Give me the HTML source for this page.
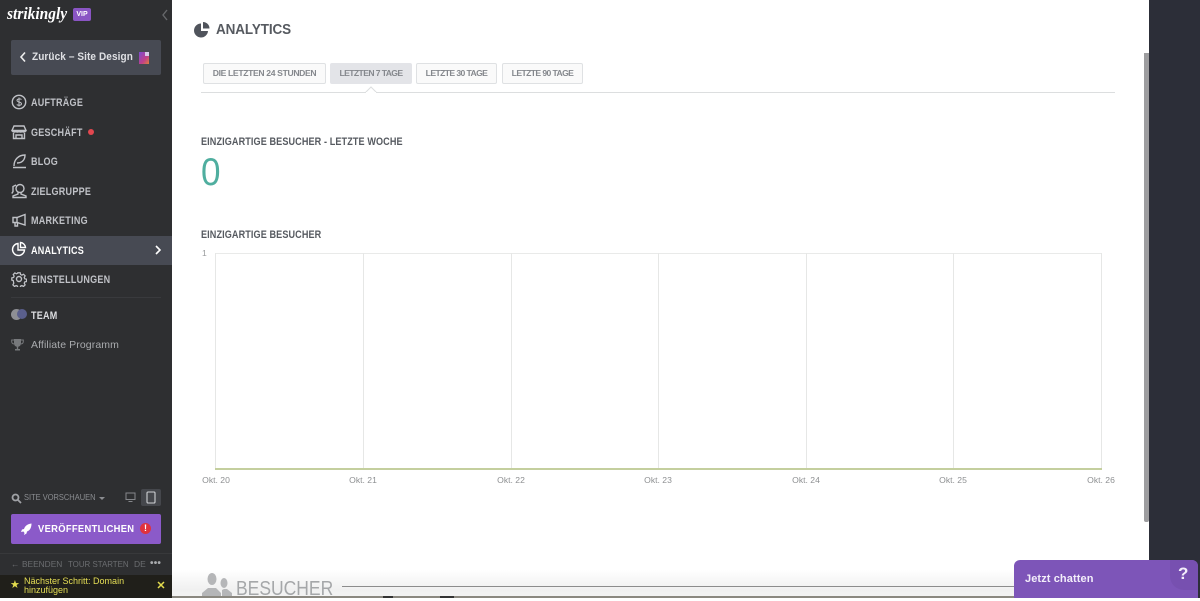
<!DOCTYPE html>
<html><head><meta charset="utf-8">
<style>
html,body{margin:0;padding:0;width:1200px;height:598px;overflow:hidden;background:#fff;font-family:"Liberation Sans",sans-serif}
.a{position:absolute;white-space:nowrap;transform-origin:left top}
#side{position:absolute;left:0;top:0;width:172px;height:598px;background:#2e2f31}
.nav{font-size:10.8px;font-weight:bold;color:#c0c2c7;letter-spacing:.3px;left:31px;line-height:12px;transform:scaleX(.835)}
.tab{position:absolute;top:63px;height:19px;border:1px solid #dfe1e3;border-radius:2px;background:#fafafa;font-size:8.6px;font-weight:bold;color:#85888d;text-align:center;line-height:19px;letter-spacing:-.35px;white-space:nowrap}
.tab.n{letter-spacing:-.6px}
.ic{position:absolute;fill:none;stroke:#c0c2c7;stroke-width:1.4}
.gv{position:absolute;top:253px;width:1px;height:216px;background:#e6e7e6}
.xl{position:absolute;top:475px;font-size:8.6px;color:#8d8f91;width:50px;text-align:center;line-height:11px}
.h{font-size:11px;font-weight:bold;color:#565a60;line-height:13px;letter-spacing:.12px;transform:scaleX(.827)}
</style></head><body>
<div id="side">
<div class="a" style="left:7px;top:4px;font-family:'Liberation Serif',serif;font-style:italic;font-weight:bold;font-size:17px;color:#fff;line-height:20px;transform:scaleX(.91)">strikingly</div>
<div class="a" style="left:73px;top:8px;width:18px;height:13px;background:#8a55c4;border-radius:2px;color:#fff;font-size:7px;font-weight:bold;text-align:center;line-height:13px">VIP</div>
<svg class="ic" style="left:161px;top:9px;stroke:#66686b" width="8" height="12"><path d="M6 1L2 6l4 5"/></svg>

<div class="a" style="left:11px;top:40px;width:150px;height:35px;background:#474a53;border-radius:2px"></div>
<svg class="ic" style="left:19px;top:51px;stroke:#eee;stroke-width:1.6" width="8" height="12"><path d="M6 1.500L2 6l4 4.500"/></svg>
<div class="a" style="left:32px;top:51px;font-size:10.600px;color:#dfe0e4;line-height:13px;font-weight:bold;letter-spacing:.1px;transform:scaleX(.945)">Zurück – Site Design</div>
<svg class="a" style="left:139px;top:52px" width="11" height="12"><defs><linearGradient id="g" x1="0" y1="0" x2="1" y2="1"><stop offset="0" stop-color="#7a4bd0"/><stop offset=".6" stop-color="#c0408a"/><stop offset="1" stop-color="#e0803a"/></linearGradient></defs><rect width="10" height="12" fill="url(#g)"/><rect x="6" y="0" width="4" height="4" fill="#d8c8e8"/></svg>

<svg class="ic" style="left:11px;top:94px" width="16" height="16"><circle cx="8" cy="8" r="6.700"/><path d="M10.500 5.500C9 4.500 6 4.700 6 6.500S10.500 8 10.500 9.700 7.500 11.800 5.700 10.600M8 3.500v9" stroke-width="1"/></svg>
<div class="a nav" style="top:97px">AUFTRÄGE</div>
<svg class="ic" style="left:11px;top:124px" width="16" height="16"><path d="M3 2h10l2 4.500H1zM1.500 6.500c0 2 3 2 3.200 0 .2 2 3.100 2 3.300 0 .2 2 3.100 2 3.300 0 .2 2 3.200 2 3.200 0M2.500 9v5.500h11V9M5 14.500V11h6v3.500"/></svg>
<div class="a nav" style="top:127px">GESCHÄFT</div>
<div class="a" style="left:88px;top:129px;width:6px;height:6px;border-radius:50%;background:#e2474f"></div>
<svg class="ic" style="left:11px;top:153px" width="16" height="16"><path d="M3 13C3 7 7 2 14 2c0 5-3 8-8 8M2 14.500h13M8 14.500h6"/></svg>
<div class="a nav" style="top:156px">BLOG</div>
<svg class="ic" style="left:11px;top:183px" width="16" height="16"><circle cx="9" cy="5.500" r="4"/><path d="M7 9.500v1.500l-5 2v1.500h13V13l-5-2V9.500M5 2L2 3.500v5L0.800 10.500"/></svg>
<div class="a nav" style="top:186px">ZIELGRUPPE</div>
<svg class="ic" style="left:11px;top:212px" width="16" height="16"><path d="M14 2.500v10.500L6 10.500H2V5.500h4zM6 5.500v5M4 10.500V14h2.500v-3"/></svg>
<div class="a nav" style="top:215px">MARKETING</div>

<div class="a" style="left:0;top:236px;width:172px;height:29px;background:#474a53"></div>
<svg class="ic" style="left:11px;top:241px;stroke:#fff" width="16" height="16"><path d="M7 2.500a6 6 0 1 0 6.500 6.500H7zM9.500 1.500a5.500 5.500 0 0 1 5 5h-5z"/></svg>
<div class="a nav" style="top:245px;color:#fff">ANALYTICS</div>
<svg class="ic" style="left:154px;top:245px;stroke:#fff;stroke-width:1.600" width="8" height="10"><path d="M2 1l4 4-4 4"/></svg>

<svg class="ic" style="left:11px;top:271px" width="16" height="16"><circle cx="8" cy="8" r="2.500"/><path d="M6.700 1h2.600l.4 2 1.500.7 1.800-1 1.800 1.800-1 1.800.6 1.500 2 .4v2.600l-2 .4-.6 1.500 1 1.800-1.800 1.800-1.800-1-1.500.6-.4 2H6.700l-.4-2-1.500-.6-1.800 1-1.800-1.800 1-1.800L1.600 9.700 0 9.300V6.700l2-.4.6-1.500-1-1.800 1.800-1.800 1.800 1 1.500-.7z" transform="translate(.8 .8) scale(.9)"/></svg>
<div class="a nav" style="top:274px">EINSTELLUNGEN</div>

<div class="a" style="left:11px;top:297px;width:150px;height:1px;background:#393a3d"></div>
<div class="a" style="left:11px;top:309px;width:11px;height:11px;border-radius:50%;background:#8e8f94"></div>
<div class="a" style="left:17px;top:309px;width:10px;height:10px;border-radius:50%;background:#5a5f8c"></div>
<div class="a nav" style="top:310px;color:#dcdde0">TEAM</div>
<svg class="a" style="left:11px;top:338px" width="13" height="14" fill="#77797c"><path d="M3 1h7v4c0 2.500-1.500 3.500-2.800 3.800V11H9v1.500H4V11h1.800V8.800C4.500 8.500 3 7.500 3 5z"/><path d="M3 2H.7v1.500C.7 5 2 5.800 3 6M10 2h2.300v1.500C12.300 5 11 5.800 10 6" fill="none" stroke="#77797c"/></svg>
<div class="a" style="left:31px;top:339px;font-size:10.500px;color:#a9abae;line-height:13px;letter-spacing:.1px">Affiliate Programm</div>

<svg class="ic" style="left:11px;top:493px;stroke:#a0a2a6;stroke-width:1.800" width="11" height="11"><circle cx="4.500" cy="4.500" r="3"/><path d="M7 7l3 3"/></svg>
<div class="a" style="left:24px;top:492px;font-size:8.500px;color:#8b8d91;line-height:11px;transform:scaleX(.88)">SITE VORSCHAUEN</div>
<div class="a" style="left:99px;top:497px;border:3px solid transparent;border-top-color:#8b8d91;border-bottom:0"></div>
<svg class="ic" style="left:125px;top:492px;stroke:#85878b;stroke-width:1" width="11" height="11"><rect x="1" y="1" width="9" height="6.500"/><path d="M3.500 9.500h4"/></svg>
<div class="a" style="left:141px;top:489px;width:20px;height:17px;background:#45474c;border-radius:2px"></div>
<svg class="ic" style="left:146px;top:491px;stroke:#d0d2d5;stroke-width:1.100" width="10" height="13"><rect x="1" y="1" width="8" height="11" rx="1"/></svg>

<div class="a" style="left:11px;top:514px;width:150px;height:30px;background:#8b5ac9;border-radius:2px"></div>
<svg class="a" style="left:21px;top:523px" width="11" height="12" fill="#fff"><path d="M10.500.5C6.500.8 4 3 3 6L1 6.500 0 9l2.500-.5 1 1.500L3 12l2.500-1.500.5-2c3-1 4.500-4 4.500-8z"/></svg>
<div class="a" style="left:38px;top:523px;font-size:10.300px;font-weight:bold;color:#fff;line-height:13px;letter-spacing:.35px;transform:scaleX(.91)">VERÖFFENTLICHEN</div>
<div class="a" style="left:140px;top:523px;width:11px;height:11px;border-radius:50%;background:#e0323e;color:#fff;font-size:9px;font-weight:bold;text-align:center;line-height:11px">!</div>

<div class="a" style="left:0;top:553px;width:172px;height:1px;background:#38393b"></div>
<div class="a" style="left:11px;top:559px;font-size:8.500px;color:#6b6d70;line-height:11px">←</div>
<div class="a" style="left:22px;top:559px;font-size:8.500px;color:#6b6d70;line-height:11px;transform:scaleX(.98)">BEENDEN</div>
<div class="a" style="left:68px;top:559px;font-size:8.500px;color:#6b6d70;line-height:11px;transform:scaleX(.93)">TOUR STARTEN</div>
<div class="a" style="left:134px;top:559px;font-size:8.500px;color:#6b6d70;line-height:11px">DE</div>
<div class="a" style="left:150px;top:558px;font-size:10px;font-weight:bold;color:#a9abae;line-height:11px;letter-spacing:.2px">•••</div>

<div class="a" style="left:0;top:575px;width:172px;height:23px;background:#201f1a"></div>
<div class="a" style="left:10px;top:578px;color:#e3dc4e;font-size:11px;line-height:14px">★</div>
<div class="a" style="left:24px;top:576.500px;font-size:9.200px;line-height:9.500px;color:#e6df55;transform:scaleX(.98)">Nächster Schritt: Domain<br>hinzufügen</div>
<svg class="ic" style="left:157px;top:581px;stroke:#e3dc4e;stroke-width:1.500" width="8" height="8"><path d="M1 1l6 6M7 1L1 7"/></svg>
</div>

<!-- main -->
<svg class="a" style="left:194px;top:22px" width="16" height="16" fill="#50545c"><path d="M7 1.500a7 7 0 1 0 7 7.500H7z"/><path d="M9 0a6.500 6.500 0 0 1 6.500 6.500H9z"/></svg>
<div class="a" style="left:216px;top:22px;font-size:14.500px;font-weight:bold;color:#565a60;line-height:16px;letter-spacing:-.1px;transform:scaleX(.93)">ANALYTICS</div>

<div class="tab" style="left:203px;width:121px">DIE LETZTEN 24 STUNDEN</div>
<div class="tab n" style="left:330px;width:80px;background:#e3e4e8;border-color:#e3e4e8">LETZTEN 7 TAGE</div>
<div class="tab n" style="left:416px;width:79px">LETZTE 30 TAGE</div>
<div class="tab n" style="left:502px;width:79px">LETZTE 90 TAGE</div>
<div class="a" style="left:201px;top:92px;width:914px;height:1px;background:#dcdedf"></div>
<svg class="a" style="left:364px;top:86px" width="14" height="8"><path d="M0 6.500h1.500L7 1l5.500 5.500H14" fill="#fff" stroke="#dcdedf"/><rect x="2" y="6" width="10" height="2" fill="#fff"/></svg>

<div class="a h" style="left:201px;top:136px">EINZIGARTIGE BESUCHER - LETZTE WOCHE</div>
<div class="a" style="left:200.500px;top:151px;font-size:39px;color:#4fae9f;line-height:44px;transform:scaleX(.9)">0</div>
<div class="a h" style="left:201px;top:229px">EINZIGARTIGE BESUCHER</div>

<div class="a" style="left:202px;top:248px;font-size:8.600px;color:#9a9c9e;line-height:11px">1</div>
<div class="a" style="left:215px;top:253px;width:887px;height:1px;background:#e9eae9"></div>
<div class="gv" style="left:215px"></div><div class="gv" style="left:363px"></div><div class="gv" style="left:511px"></div><div class="gv" style="left:658px"></div><div class="gv" style="left:806px"></div><div class="gv" style="left:953px"></div><div class="gv" style="left:1101px"></div>
<div class="a" style="left:215px;top:468px;width:887px;height:2px;background:#c4cf9e"></div>
<div class="xl" style="left:191px">Okt. 20</div><div class="xl" style="left:338px">Okt. 21</div><div class="xl" style="left:486px">Okt. 22</div><div class="xl" style="left:633px">Okt. 23</div><div class="xl" style="left:781px">Okt. 24</div><div class="xl" style="left:928px">Okt. 25</div><div class="xl" style="left:1076px">Okt. 26</div>

<!-- bottom fade section -->
<div class="a" style="left:172px;top:570px;width:842px;height:28px;background:linear-gradient(#fff,#f0f0f0 70%,#f4f4f4)"></div>
<svg class="a" style="left:202px;top:572px" width="30" height="26" fill="#b5b6b8"><ellipse cx="10" cy="7" rx="4.500" ry="6"/><path d="M0 26v-5l6-5h8l5 5v5z"/><ellipse cx="22" cy="11" rx="3.500" ry="5"/><path d="M20 18l2-1h3l5 4v5H20z"/></svg>
<div class="a" style="left:236px;top:577px;font-size:20px;color:#a5a7a9;line-height:24px;transform:scaleX(.875)">BESUCHER</div>
<div class="a" style="left:342px;top:586px;width:672px;height:1px;background:#8c8c8c"></div>
<div class="a" style="left:172px;top:596px;width:842px;height:2px;background:#8b8880"></div>
<div class="a" style="left:383px;top:596px;width:10px;height:2px;background:#333"></div>
<div class="a" style="left:440px;top:596px;width:14px;height:2px;background:#333"></div>

<!-- scrollbar & right -->
<div class="a" style="left:1144px;top:53px;width:5px;height:469px;background:#9d9d9f;border-radius:0 0 2px 2px"></div>
<div class="a" style="left:1149px;top:0;width:51px;height:598px;background:#2c2e38"></div>

<!-- chat -->
<div class="a" style="left:1014px;top:560px;width:184px;height:38px;background:#7d55b8;border-radius:6px 6px 0 0"></div>
<div class="a" style="left:1170px;top:560px;width:28px;height:30px;background:#7750b0;border-radius:0 6px 0 14px"></div>
<div class="a" style="left:1025px;top:572px;font-size:11px;font-weight:bold;color:#f3eefa;line-height:14px;letter-spacing:.1px">Jetzt chatten</div>
<div class="a" style="left:1178px;top:565px;font-size:17px;font-weight:bold;color:#f3eefa;line-height:18px">?</div>
</body></html>
